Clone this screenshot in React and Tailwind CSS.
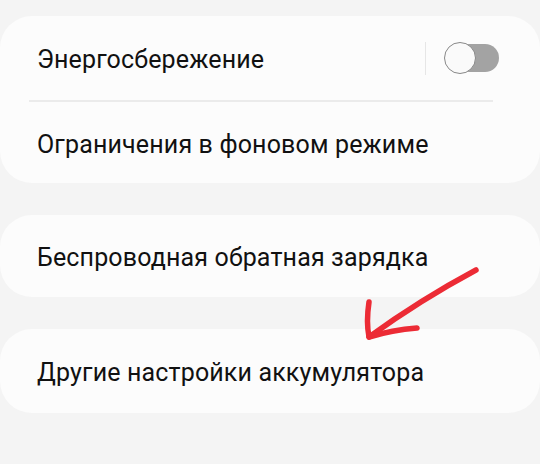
export default function App() {
  return (
    <div className="w-[540px] h-[464px] bg-[#f4f4f4] pt-[16px] flex flex-col gap-[32px] font-['Roboto',sans-serif] text-[#111] overflow-hidden relative">
      {/* card 1 */}
      <div className="bg-[#fcfcfc] rounded-[32px] flex flex-col">
        <div className="h-[84px] flex items-center pl-[37px] pr-[41px]">
          <span className="flex-1 pt-[3px] text-[25px] tracking-[0.15px]">Энергосбережение</span>
          <div className="w-px h-[33px] bg-[#e6e6e6] mr-[18px]" />
          <div className="relative w-[55px] h-[32px] flex items-center">
            <div className="absolute left-[2px] right-0 h-[28px] rounded-full bg-[#a3a3a3]" />
            <div className="relative w-[32px] h-[32px] rounded-full bg-[#fafafa] border-[1.5px] border-[#888]" />
          </div>
        </div>
        <div className="h-[2px] bg-[#ebebeb] ml-[29px] mr-[47px]" />
        <div className="h-[81px] flex items-center pl-[37px]">
          <span className="pt-[4px] text-[25px] tracking-[0.15px]">Ограничения в фоновом режиме</span>
        </div>
      </div>

      {/* card 2 */}
      <div className="bg-[#fcfcfc] rounded-[32px] h-[82px] flex items-center pl-[37px]">
        <span className="pt-[4px] text-[25px] tracking-[0.15px]">Беспроводная обратная зарядка</span>
      </div>

      {/* card 3 */}
      <div className="bg-[#fcfcfc] rounded-[32px] h-[84px] flex items-center pl-[37px]">
        <span className="pt-[4px] text-[25px] tracking-[0.15px]">Другие настройки аккумулятора</span>
      </div>

      {/* red hand-drawn arrow */}
      <svg className="absolute left-0 top-0 pointer-events-none" width="540" height="464" viewBox="0 0 540 464">
        <g fill="none" stroke="#ec2b35" strokeWidth="5.5" strokeLinecap="round" strokeLinejoin="round">
          <path d="M476 270 Q420 300 369 337" />
          <path d="M369 302 Q366 322 369 337 Q392 330 417 328" />
        </g>
      </svg>
    </div>
  );
}
